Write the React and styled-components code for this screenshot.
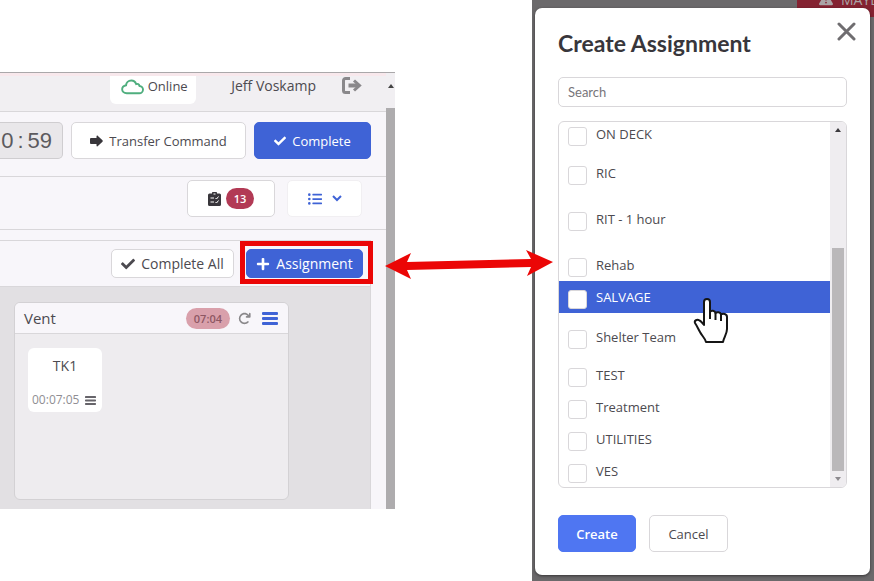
import styled, { createGlobalStyle, css } from 'styled-components'
import { useState } from 'react';
import { FaCheck, FaPlus, FaListUl } from 'react-icons/fa';
import { FaTriangleExclamation, FaArrowRotateRight } from 'react-icons/fa6';

const colors = {
    primary: '#3f63d6',
    text: '#4c4a50',
    line: '#d9d7da',
    danger: '#b23a55',
    mark: '#eb0606',
}

const GlobalStyle = createGlobalStyle`
    *, *::before, *::after {
        box-sizing: border-box;
    }
    body {
        margin: 0;
        background: #fff;
        color: ${colors.text};
        font: 14px/20px 'Open Sans', sans-serif;
    }
    button, input {
        font: inherit;
        color: inherit;
    }
`

const Page = styled.main`
    display: grid;
    grid-template-columns: 395fr 137fr 342fr;
    min-height: 100vh;
    overflow: hidden;
`

const Board = styled.section`
    display: grid;
    grid-template-columns: minmax(0, 1fr) 9px;
    align-self: start;
    margin-top: 72px;
    border-top: 1px solid #aaa8aa;
    background: #f8f6fa;
`

const BoardBody = styled.div`
    display: flex;
    flex-direction: column;
`

const Header = styled.header`
    display: flex;
    justify-content: flex-end;
    align-items: flex-start;
    height: 39px;
    padding-right: 24px;
    border-top: 3px solid #f8e8ec;
    border-bottom: 1px solid ${colors.line};
    background: #f1eff2;
`

const Status = styled.div`
    display: flex;
    align-items: flex-start;
    justify-content: center;
    gap: 4px;
    width: 86px;
    height: 28px;
    padding-left: 2px;
    border-radius: 0 0 6px 6px;
    background: #fff;
    font-size: 13px;
    svg {
        margin-top: 3px;
    }
`

const User = styled.span`
    margin: 0 26px 0 35px;
`

const IconButton = styled.button`
    display: flex;
    padding: 0;
    border: 0;
    background: none;
    color: ${({ $color }) => $color || '#8a888b'};
    cursor: pointer;
`

const Row = styled.div`
    display: flex;
    justify-content: flex-end;
    align-items: ${({ $align }) => $align || 'flex-start'};
    gap: ${({ $gap }) => $gap || 8}px;
    height: ${({ $height }) => $height}px;
    padding: ${({ $padding }) => $padding};
    border-bottom: 1px solid ${colors.line};
`

const Button = styled.button`
    display: flex;
    align-items: center;
    justify-content: center;
    gap: ${({ $gap }) => $gap || 6}px;
    width: ${({ $width }) => $width}px;
    height: ${({ $height }) => $height || 37}px;
    padding: 0;
    border: 1px solid ${({ $quiet }) => ($quiet ? '#f1eff2' : colors.line)};
    border-radius: 5px;
    background: #fff;
    font-size: ${({ $large }) => ($large ? 14 : 13)}px;
    white-space: nowrap;
    cursor: pointer;
    ${({ $quiet }) => $quiet && css`
        color: ${colors.primary};
    `}
    ${({ $primary }) => $primary && css`
        border-color: ${colors.primary};
        background: ${colors.primary};
        color: #fff;
    `}
`

const Timer = styled.div`
    display: flex;
    align-items: center;
    justify-content: flex-end;
    flex: 1;
    gap: 4px;
    height: 37px;
    padding-right: 10px;
    border: 1px solid #cfcdd0;
    border-left: 0;
    border-radius: 0 5px 5px 0;
    background: #e9e7ea;
    color: #5c5a5e;
    font: 22px/24px 'Liberation Sans', sans-serif;
`

const Badge = styled.span`
    padding: 0 8px;
    border-radius: 11px;
    background: ${({ $soft }) => ($soft ? '#d9a0ab' : colors.danger)};
    color: ${({ $soft }) => ($soft ? '#8d5763' : '#fff')};
    font-size: 11px;
    line-height: 21px;
    font-weight: 600;
`

const Division = styled.div`
    margin: 10px 15px 0 0;
    border: 1px solid ${colors.line};
    border-width: 1px 1px 0 0;
`

const Marked = styled.div`
    position: relative;
    &::after {
        content: '';
        position: absolute;
        inset: -8px -10px -6px -6px;
        border: 5px solid ${colors.mark};
        pointer-events: none;
    }
`

const Lanes = styled.div`
    padding: 15px 81px 9px 14px;
    background: #e2e0e3;
`

const Lane = styled.section`
    min-height: 198px;
    border: 1px solid #d3d1d4;
    border-radius: 6px;
    background: #eeecef;
    overflow: hidden;
`

const LaneHeader = styled.header`
    display: flex;
    align-items: center;
    gap: 8px;
    height: 31px;
    padding: 0 10px 0 9px;
    border-bottom: 1px solid ${colors.line};
    background: #f8f6fa;
`

const LaneTitle = styled.h2`
    flex: 1;
    margin: 0;
    font-size: 15px;
    font-weight: 400;
`

const LaneActions = styled.div`
    display: flex;
    align-items: center;
    gap: 11px;
`

const Unit = styled.article`
    display: flex;
    flex-direction: column;
    justify-content: space-between;
    width: 74px;
    height: 64px;
    margin: 14px 13px;
    padding: 8px 4px 2px;
    border-radius: 6px;
    background: #fff;
    text-align: center;
`

const UnitTime = styled.div`
    display: flex;
    align-items: center;
    justify-content: space-between;
    padding-right: 2px;
    color: #908e93;
    font-size: 12px;
`

const Scrollbar = styled.div`
    background: #f1eff2;
    &::before {
        content: '';
        display: block;
        width: 0;
        margin: 11px auto 0 2px;
        border: 3px solid transparent;
        border-top: 0;
        border-bottom: 4px solid #444;
    }
`

const Thumb = styled.div`
    height: calc(100% - 35px);
    margin-top: 20px;
    background: #aeacae;
`

const Link = styled.div`
    position: relative;
    z-index: 2;
    svg {
        position: absolute;
        top: 249px;
        left: -10px;
        width: calc(100% + 31px);
        height: 31px;
    }
`

const Backdrop = styled.section`
    position: relative;
    padding: 8px 4px 6px 3px;
    background: #6b696b;
    overflow: hidden;
`

const Mayday = styled.div`
    position: absolute;
    top: 0;
    right: 0;
    display: flex;
    align-items: flex-start;
    gap: 8px;
    width: 77px;
    height: 17px;
    padding-left: 22px;
    background: #842231;
    color: #aaa3a5;
    overflow: hidden;
    svg {
        flex: none;
        margin-top: -8px;
    }
    span {
        margin-top: -10px;
    }
`

const Modal = styled.form`
    position: relative;
    display: flex;
    flex-direction: column;
    min-height: 567px;
    padding: 19px 23px 23px;
    border-radius: 7px;
    background: #fff;
    box-shadow: 0 1px 3px rgba(0, 0, 0, .5);
`

const Title = styled.h1`
    margin: 0;
    color: #38363b;
    font: 700 23px/32px Lato, sans-serif;
`

const Close = styled(IconButton)`
    position: absolute;
    top: 14px;
    right: 14px;
`

const Search = styled.input`
    width: 100%;
    height: 30px;
    margin: 18px 0 14px;
    padding: 0 9px;
    border: 1px solid ${colors.line};
    border-radius: 5px;
    font: 13px/18px Lato, sans-serif;
    &::placeholder {
        color: #77757a;
    }
`

const Options = styled.div`
    display: grid;
    grid-template-columns: 1fr 16px;
    height: 367px;
    border: 1px solid ${colors.line};
    border-radius: 6px;
    overflow: hidden;
`

const OptionList = styled.div`
    display: flex;
    flex-direction: column;
    justify-content: flex-end;
    min-height: 0;
    overflow: hidden;
`

const Option = styled.label`
    display: flex;
    flex: none;
    align-items: center;
    gap: 9px;
    height: 32px;
    margin-top: ${({ $space }) => $space || 0}px;
    padding-left: 9px;
    font-size: 13px;
    cursor: pointer;
    ${({ $active }) => $active && css`
        background: ${colors.primary};
        color: #fff;
    `}
`

const Checkbox = styled.input`
    appearance: none;
    width: 19px;
    height: 19px;
    margin: 4px 0 0;
    border: 1px solid ${colors.line};
    border-radius: 3px;
    background: #fff;
    &:checked {
        background: #9fb1ea;
    }
`

const ListScrollbar = styled.div`
    display: flex;
    flex-direction: column;
    align-items: center;
    padding: 6px 0;
    background: #efedf0;
    &::before, &::after {
        content: '';
        border: 3px solid transparent;
    }
    &::before {
        border-top: 0;
        border-bottom: 4px solid #3c3a3e;
    }
    &::after {
        border-bottom: 0;
        border-top: 4px solid #8c8a8e;
    }
    div {
        flex: 1;
        width: 12px;
        margin: 116px 0 6px;
        background: #bab8ba;
    }
`

const Actions = styled.div`
    display: flex;
    gap: 13px;
    margin-top: 27px;
`

const Submit = styled(Button)`
    border-color: #4f76f2;
    background: #4f76f2;
    color: #fff;
    font-weight: 600;
`

const Pointer = styled.svg`
    position: absolute;
    top: 290px;
    right: 141px;
    pointer-events: none;
`

const teams = [
    { name: 'ON DECK' },
    { name: 'RIC', space: 7 },
    { name: 'RIT - 1 hour', space: 14 },
    { name: 'Rehab', space: 14 },
    { name: 'SALVAGE' },
    { name: 'Shelter Team', space: 8 },
    { name: 'TEST', space: 6 },
    { name: 'Treatment' },
    { name: 'UTILITIES' },
    { name: 'VES' },
]

function CloudIcon() {
    return (
        <svg width="23" height="16" viewBox="0 0 24 16" fill="none" stroke="#4fae7e" strokeWidth="2">
            <path d="M6 14.500h13a3.800 3.800 0 0 0 .3-7.600c-.4-1.700-1.900-2.500-3.500-2C15 2.500 13 1.200 10.700 1.200 7.700 1.200 5.400 3.400 5.300 6.200 2.900 6.700 1.200 8.300 1.200 10.400c0 2.300 2 4.100 4.800 4.100z" />
        </svg>
    )
}

function LogoutIcon() {
    return (
        <svg width="20" height="19" viewBox="0 0 20 19" fill="none" stroke="currentColor" strokeWidth="3">
            <path d="M8 2.500H3.500a2 2 0 0 0-2 2v10a2 2 0 0 0 2 2H8" />
            <path d="M6.500 9.500H16" strokeWidth="4" />
            <path d="m12 4.500 5.500 5-5.500 5" />
        </svg>
    )
}

function TransferIcon() {
    return (
        <svg width="13" height="12" viewBox="0 0 13 12" fill="#38363b">
            <path d="M0 4a1 1 0 0 1 1-1h5.500V1.500c0-1 .8-1.200 1.400-.6l4.600 4.400c.4.400.4 1 0 1.400l-4.600 4.400c-.6.600-1.400.4-1.400-.6V9H1a1 1 0 0 1-1-1z" />
        </svg>
    )
}

function ClipboardIcon() {
    return (
        <svg width="13" height="14" viewBox="0 0 13 14">
            <path fill="#38363b" d="M1.500 1.500H4a2.500 2.500 0 0 1 5 0h2.500A1.500 1.500 0 0 1 13 3v9.500a1.500 1.500 0 0 1-1.500 1.500h-10A1.500 1.500 0 0 1 0 12.500V3a1.500 1.500 0 0 1 1.500-1.500z" />
            <path fill="none" stroke="#fff" d="M2.500 6H6M2.500 10H6M7.500 6l1 1 2-2.500M7.500 10l1 1 2-2.500M5.500 2h2" />
        </svg>
    )
}

function MenuIcon({ width, height }) {
    return (
        <svg width={width} height={height} viewBox="0 0 16 13" preserveAspectRatio="none" fill="currentColor">
            <rect width="16" height="3" rx="1" />
            <rect y="5" width="16" height="3" rx="1" />
            <rect y="10" width="16" height="3" rx="1" />
        </svg>
    )
}

function ChevronIcon() {
    return (
        <svg width="10" height="7" viewBox="0 0 10 7" fill="none" stroke="currentColor" strokeWidth="2">
            <path d="m1 1 4 4 4-4" />
        </svg>
    )
}

function CloseIcon() {
    return (
        <svg width="19" height="19" viewBox="0 0 19 19" fill="none" stroke="#6f6d70" strokeWidth="3" strokeLinecap="round">
            <path d="m2 2 15 15M17 2 2 17" />
        </svg>
    )
}

export default function App() {
    const [search, setSearch] = useState('');
    const [checked, setChecked] = useState([]);

    function toggle(name) {
        setChecked(checked.includes(name) ? checked.filter(item => item !== name) : [...checked, name])
    }

    const visible = teams.filter(team => team.name.toLowerCase().includes(search.toLowerCase()))

    return (
        <Page>
            <GlobalStyle />
            <Board>
                <BoardBody>
                    <Header>
                        <Status><CloudIcon />Online</Status>
                        <User>Jeff Voskamp</User>
                        <IconButton aria-label="Log out"><LogoutIcon /></IconButton>
                    </Header>
                    <Row $height={65} $padding="10px 15px 0 0">
                        <Timer><span>0</span><span>:</span><span>59</span></Timer>
                        <Button $width={175}><TransferIcon />Transfer Command</Button>
                        <Button $width={117} $primary><FaCheck size={12} />Complete</Button>
                    </Row>
                    <Row $height={53} $gap={12} $padding="3px 24px 0 0">
                        <Button $width={88} $gap={5}><ClipboardIcon /><Badge>13</Badge></Button>
                        <Button $width={75} $gap={10} $quiet aria-label="List view">
                            <FaListUl size={14} />
                            <ChevronIcon />
                        </Button>
                    </Row>
                    <Division>
                        <Row $height={46} $gap={12} $padding="0 7px 0 0" $align="center">
                            <Button $width={123} $height={29} $large><FaCheck size={14} />Complete All</Button>
                            <Marked>
                                <Button $width={117} $height={29} $large $primary><FaPlus size={14} />Assignment</Button>
                            </Marked>
                        </Row>
                        <Lanes>
                            <Lane>
                                <LaneHeader>
                                    <LaneTitle>Vent</LaneTitle>
                                    <Badge $soft>07:04</Badge>
                                    <LaneActions>
                                        <IconButton aria-label="Refresh"><FaArrowRotateRight size={13} /></IconButton>
                                        <IconButton aria-label="Vent menu" $color={colors.primary}><MenuIcon width={16} height={13} /></IconButton>
                                    </LaneActions>
                                </LaneHeader>
                                <Unit>
                                    <span>TK1</span>
                                    <UnitTime>
                                        00:07:05
                                        <IconButton aria-label="TK1 menu" $color="#66646a"><MenuIcon width={11} height={9} /></IconButton>
                                    </UnitTime>
                                </Unit>
                            </Lane>
                        </Lanes>
                    </Division>
                </BoardBody>
                <Scrollbar><Thumb /></Scrollbar>
            </Board>
            <Link>
                <svg viewBox="0 0 168 31" preserveAspectRatio="none" fill={colors.mark}>
                    <path d="M0 17 26 4 22 13 146 10 141 1 168 13 142 27 146 18 22 21 26 30z" />
                </svg>
            </Link>
            <Backdrop>
                <Mayday><FaTriangleExclamation size={14} /><span>MAYDAY</span></Mayday>
                <Modal onSubmit={e => e.preventDefault()}>
                    <Close type="button" aria-label="Close"><CloseIcon /></Close>
                    <Title>Create Assignment</Title>
                    <Search aria-label="Search" placeholder="Search" value={search} onChange={e => setSearch(e.target.value)} />
                    <Options>
                        <OptionList>
                            {visible.map(team => (
                                <Option key={team.name} $space={team.space} $active={team.name === 'SALVAGE'}>
                                    <Checkbox type="checkbox" checked={checked.includes(team.name)} onChange={() => toggle(team.name)} />
                                    <span>{team.name}</span>
                                </Option>
                            ))}
                        </OptionList>
                        <ListScrollbar><div /></ListScrollbar>
                    </Options>
                    <Actions>
                        <Submit $width={78} type="submit">Create</Submit>
                        <Button $width={79} type="button">Cancel</Button>
                    </Actions>
                    <Pointer width="36" height="47" viewBox="0 0 36 47" fill="#fff" stroke="#151515" strokeWidth="2" strokeLinejoin="round">
                        <path d="M11 27V4a3 3 0 0 1 6 0V14c1-2 5-1.500 5.500 1 1.500-1.500 5-1 5.500 1.500 2-1.500 6-.5 6 2.500V31c0 5-3 8-4 13H13c-1-4-4-6-6-10-2-3.500-3-6-5-9-1-2.500 2-4 4.500-2.500C8 23 9.500 25 11 27z" />
                        <path d="M17 14v7M22.500 15v7M28 17v6" />
                    </Pointer>
                </Modal>
            </Backdrop>
        </Page>
    )
}
